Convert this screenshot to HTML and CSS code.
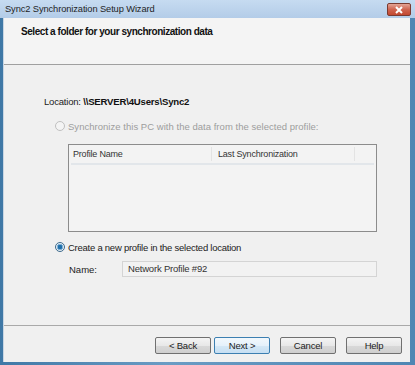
FILE: index.html
```html
<!DOCTYPE html>
<html>
<head>
<meta charset="utf-8">
<link rel="stylesheet" href="styles.css">
</head>
<body>
<div class="window">
  <div class="titlebar">
    <span class="title">Sync2 Synchronization Setup Wizard</span>
    <span class="close"><svg width="12" height="8" viewBox="0 0 12 8"><path d="M3 1 L9 7 M9 1 L3 7" stroke="#fff" stroke-width="2"/></svg></span>
  </div>
  <div class="client">
    <div class="header">Select a folder for your synchronization data</div>
    <div class="body">
      <div class="location">Location: <b>\\SERVER\4Users\Sync2</b></div>
      <label class="radio disabled"><span class="dot"></span>Synchronize this PC with the data from the selected profile:</label>
      <div class="list">
        <div class="list-head">
          <span class="col1">Profile Name</span>
          <span class="col2">Last Synchronization</span>
        </div>
      </div>
      <label class="radio checked"><span class="dot"></span>Create a new profile in the selected location</label>
      <div class="name-row">
        <span class="name-label">Name:</span>
        <span class="textbox">Network Profile #92</span>
      </div>
    </div>
    <div class="footer">
      <button class="btn">&lt; Back</button>
      <button class="btn focus">Next &gt;</button>
      <button class="btn gap">Cancel</button>
      <button class="btn gap">Help</button>
    </div>
  </div>
</div>
</body>
</html>
```
FILE: styles.css
```css
* { box-sizing: border-box; }
html, body { margin: 0; padding: 0; }
body { width: 415px; height: 365px; overflow: hidden; font-family: "Liberation Sans", Arial, sans-serif; }
.window {
  width: 415px; height: 365px;
  display: flex; flex-direction: column;
  background: linear-gradient(to right, #3f78a6, #6a9cc4 40%, #4f86b3);
}
.titlebar {
  height: 18px; display: flex; align-items: center;
  background: linear-gradient(to bottom, #c6dbf1, #b3cce8);
  padding-left: 5px; padding-right: 5px;
  position: relative;
}
.title { font-size: 9.3px; color: #1f1f1f; letter-spacing: -0.1px; }
.close {
  position: absolute; right: 4px; top: 3px;
  width: 24px; height: 13px; border-radius: 2px;
  border: 1px solid #7a3a30;
  background: linear-gradient(to bottom, #e3a496, #cf6450 50%, #c24830);
  display: flex; align-items: center; justify-content: center;
}
.client {
  flex: 1; margin: 0 5px 3px 3px;
  background: #f0f0f0;
  display: flex; flex-direction: column;
  border-left: 1px solid #c9d6e3;
}
.header {
  height: 47px; background: #f4f4f4;
  border-bottom: 1px solid #a0a0a0;
  font-size: 10px; font-weight: bold; color: #111;
  padding: 8px 0 0 17px;
  letter-spacing: -0.45px;
}
.body { flex: 1; padding-left: 40px; padding-top: 31px; font-size: 9.5px; color: #222; }
.location { height: 20px; letter-spacing: -0.2px; }
.location b { font-size: 9.6px; color: #111; letter-spacing: -0.2px; }
.radio { display: flex; align-items: center; padding-left: 11px; height: 14px; letter-spacing: -0.1px; }
.radio .dot {
  width: 10px; height: 10px; border-radius: 50%; margin-right: 3px;
  border: 1px solid #8a8a8a; background: #f4f4f4;
}
.radio.disabled { color: #9d9d9d; margin-top: 3px; letter-spacing: 0.03px; }
.radio.disabled .dot { border-color: #c0c0c0; }
.radio.checked .dot {
  border-color: #3d6a8c;
  background: radial-gradient(circle, #1f6ea9 0 2px, #7fb2d8 2.5px 3px, #e8eef4 3.5px);
}
.list {
  margin: 11px 0 0 24px; width: 309px; height: 88px;
  border: 1px solid #8c8c8c; background: #f3f3f3;
}
.list-head {
  height: 20px; display: flex; align-items: center;
  border-bottom: 2px solid #e2e6ea; margin: 0 2px;
  font-size: 9px; color: #333; letter-spacing: -0.2px;
}
.col1 { width: 141px; padding-left: 2px; border-right: 1px solid #e3e3e3; height: 14px; line-height: 14px; }
.col2 { padding-left: 6px; width: 143px; border-right: 1px solid #e3e3e3; height: 14px; line-height: 14px; }
.radio.checked { margin-top: 8px; color: #222; letter-spacing: -0.25px; }
.name-row { display: flex; align-items: center; margin-top: 7px; }
.name-label { width: 53px; padding-left: 25px; box-sizing: content-box; font-size: 9.5px; }
.textbox {
  width: 255px; height: 16px; border: 1px solid #d4d4d4; background: #f2f2f2;
  padding-left: 5px; line-height: 14px; font-size: 9.5px; color: #333; letter-spacing: -0.2px;
}
.footer {
  height: 37px; border-top: 1px solid #a9a9a9;
  display: flex; justify-content: flex-end; align-items: flex-start;
  padding: 11px 8px 0 0;
}
.btn {
  width: 56px; height: 17px; margin-left: 3px;
  border: 1px solid #707070; border-radius: 2px;
  background: linear-gradient(to bottom, #f4f4f4, #e8e8e8 50%, #d9d9d9 51%, #cfcfcf);
  font-family: "Liberation Sans", Arial, sans-serif; font-size: 9.5px; color: #222;
  padding: 0; letter-spacing: -0.2px;
}
.btn.gap { margin-left: 10px; }
.btn.focus { border-color: #3c7fb1; background: linear-gradient(to bottom, #f2f8fc, #e5f1fb 50%, #d5e8f6 51%, #c6dff3); }
```
